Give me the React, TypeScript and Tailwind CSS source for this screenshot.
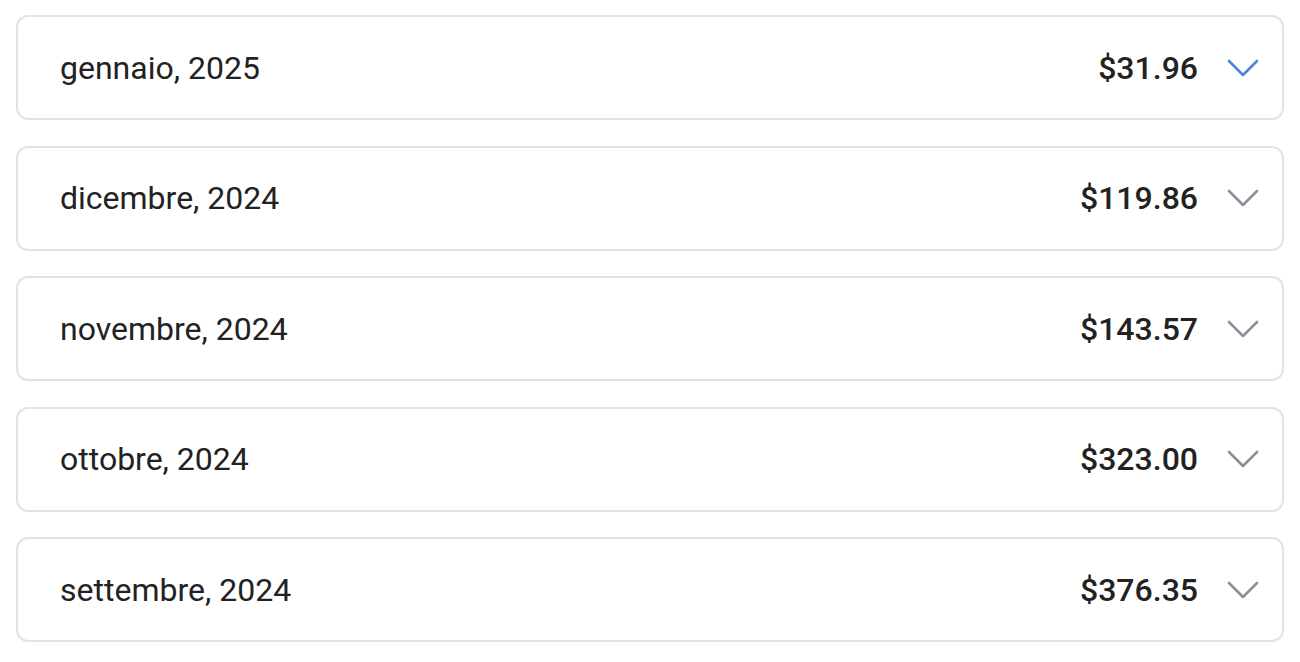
const months = [
  { label: 'gennaio, 2025', amount: '$31.96', active: true },
  { label: 'dicembre, 2024', amount: '$119.86' },
  { label: 'novembre, 2024', amount: '$143.57' },
  { label: 'ottobre, 2024', amount: '$323.00' },
  { label: 'settembre, 2024', amount: '$376.35' },
];

function Chevron({ active }: { active?: boolean }) {
  return (
    <svg
      width="32"
      height="20"
      viewBox="0 0 32 20"
      fill="none"
      className={active ? 'text-[#4a86d8]' : 'text-[#8a9099]'}
    >
      <polyline
        points="2,3 16,17 30,3"
        stroke="currentColor"
        strokeWidth="2.6"
        strokeLinecap="round"
        strokeLinejoin="round"
      />
    </svg>
  );
}

export default function App() {
  return (
    <div className="min-h-screen bg-white pt-[15px] pl-[16px] pr-[16px] font-['Roboto',sans-serif]">
      <div className="flex flex-col gap-[25.5px]">
        {months.map((m) => (
          <div
            key={m.label}
            className="flex h-[105px] items-center justify-between rounded-[12px] border-2 border-[#e3e3e3] pl-[42px] pr-[23px]"
          >
            <span className="text-[32px] text-[#222]">{m.label}</span>
            <div className="flex items-center gap-[29px]">
              <span className="text-[32px] font-medium text-[#222]">
                {m.amount}
              </span>
              <Chevron active={m.active} />
            </div>
          </div>
        ))}
      </div>
    </div>
  );
}
